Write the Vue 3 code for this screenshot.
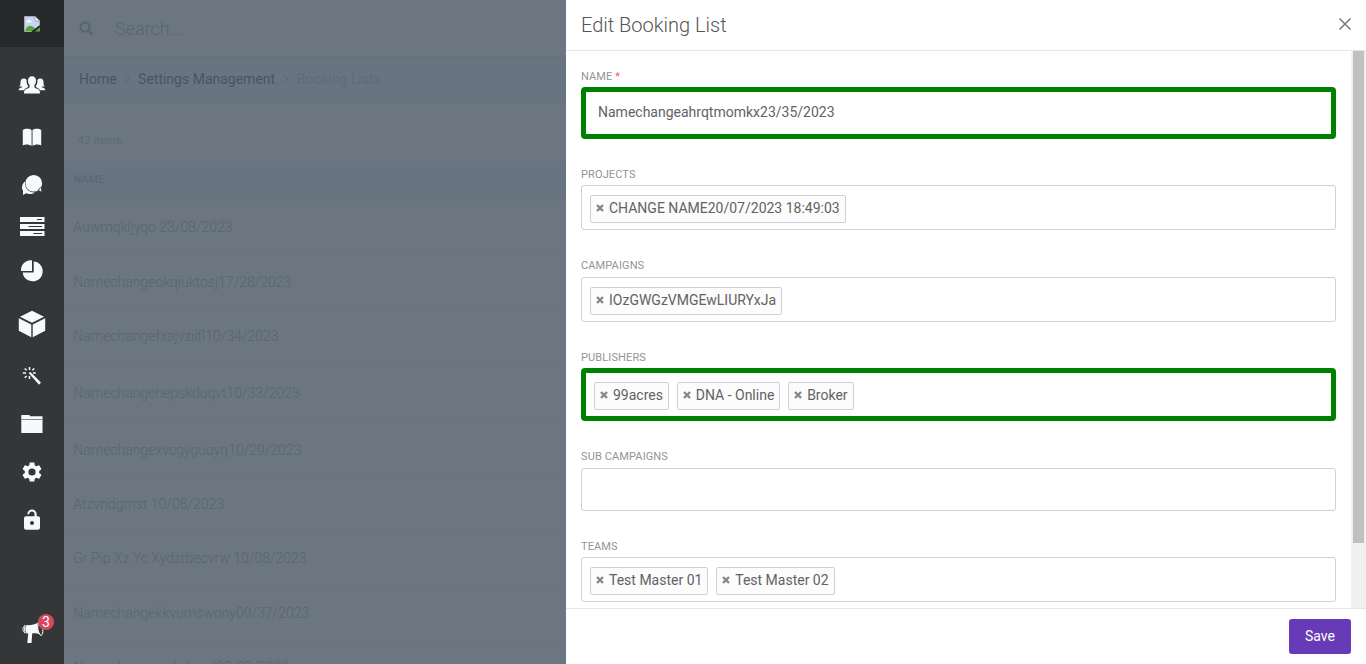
<script setup>
const rows = [
  { name: 'Auwmqkljyqo 23/08/2023', h: 54 },
  { name: 'Namechangeokqiuktosj17/28/2023', h: 55, low: true },
  { name: 'Namechangefxajvziifl10/34/2023', h: 54 },
  { name: 'Namechangehepskduqvt10/33/2023', h: 60 },
  { name: 'Namechangexvcgyguoyq10/29/2023', h: 54 },
  { name: 'Atzvridgmst 10/08/2023', h: 54 },
  { name: 'Gr Pip Xz Yc Xydzrbecvrw 10/08/2023', h: 55 },
  { name: 'Namechangekkvumswony09/37/2023', h: 54 },
  { name: 'Namechangeswkdkeuil08/38/2023', h: 54 },
]
const fields = [
  { label: 'Projects', tags: ['CHANGE NAME20/07/2023 18:49:03'], cls: 'projects' },
  { label: 'Campaigns', tags: ['IOzGWGzVMGEwLIURYxJa'], cls: 'campaigns' },
  { label: 'Publishers', tags: ['99acres', 'DNA - Online', 'Broker'], cls: 'marked publishers' },
  { label: 'Sub Campaigns', tags: [], cls: 'sub' },
  { label: 'Teams', tags: ['Test Master 01', 'Test Master 02'], cls: 'teams' },
]
</script>

<template>
  <div class="app">
    <nav class="side">
      <div class="brand">
        <svg width="16" height="16" viewBox="0 0 16 16">
          <path d="M.5.5H11L15.5 5v5L9 15.500H.5z" fill="#c3d6f4" stroke="#a5a8ac" />
          <path d="M2 6.200c0-1.500 1.500-1.700 2-1.500.7-1.500 2.700-1 2.800.5 1 0 1.200.4 1.200 1z" fill="#fff" />
          <path d="M1 15c1-3.500 3-5.200 5-5.200 2 0 3.500 1 5 2.700L8.500 15z" fill="#55aa32" />
          <path d="M11 .5V5h4.500z" fill="#fff" stroke="#a5a8ac" />
          <path d="M11 15.500 16 11v4.500z" fill="#55aa32" />
          <path d="m8 16 8-6" stroke="#28292b" stroke-width="1.600" />
        </svg>
      </div>
      <div class="item i1">
        <svg width="28" height="20" viewBox="0 0 28 20">
          <path d="M14 1.200c2.400 0 4 1.700 4 4.300 0 2-.6 3.700-1.600 4.700v1.900c.3 1 1.700 1.500 3.200 2 1.800.7 2.400 1.800 2.400 4.500H6c0-2.700.6-3.800 2.400-4.500 1.500-.5 2.900-1 3.200-2v-1.900c-1-1-1.600-2.700-1.600-4.700 0-2.600 1.600-4.300 4-4.300z" />
          <path d="M5.700 3.600c1.300 0 2.300.5 2.900 1.500-.2 2.400.3 4.500 1.500 6v.8c-1 .9-3.100 1.300-4.300 3.300H.8c0-1.600.5-2 2-2.500.9-.4 1.600-.7 1.600-1.200H1.200c1.400-1 1.300-2.800 1.300-4.500 0-2 1.200-3.400 3.200-3.400z" />
          <path d="M22.300 3.600c-1.300 0-2.300.5-2.900 1.500.2 2.400-.3 4.500-1.500 6v.8c1 .9 3.100 1.300 4.300 3.300h5c0-1.600-.5-2-2-2.500-.9-.4-1.600-.7-1.600-1.200h3.200c-1.400-1-1.300-2.800-1.300-4.500 0-2-1.200-3.400-3.200-3.400z" />
        </svg>
      </div>
      <div class="item i2">
        <svg width="20" height="19" viewBox="0 0 20 19">
          <path d="M.8 2C3 .2 7.500.2 9.600 2v16C7.500 16.300 3 16 .8 17.500zM10.500 2c2.100-1.800 6.600-1.800 8.700 0v15.500c-2.200-1.500-6.600-1.200-8.700.5z" />
        </svg>
      </div>
      <div class="item i3">
        <svg width="22" height="22" viewBox="0 0 22 22">
          <path d="M4 7.500C.5 10 .6 15 2 16.500V21l3-1.700c3 1.300 6.700.9 8.800-.9-5.600.8-10.600-4.400-9.800-10.900z" />
          <path d="M12.500 1a8.400 8.300 0 1 1-1 16.500A8.400 8.300 0 0 1 12.500 1zM17 15.500l3.300 2.300-.3-5z" />
        </svg>
      </div>
      <div class="item i4">
        <svg width="26" height="20" viewBox="-.5 .5 26 20">
          <path fill-rule="evenodd" d="M.5.500h24.500v5H.5zM17.500 2.500v1h5v-1zM.5 7.500h24.500v5H.5zM9 9.500v1h13.500v-1zM.5 14.500h24.500v5H.5zM14 16.500v1h8.500v-1z" />
        </svg>
      </div>
      <div class="item i5">
        <svg width="24" height="24" viewBox="0 0 24 24">
          <path d="M1 12V11C1 5.500 5.500 1.200 11 1.200h1V12zM13.700 2.400c5 .2 9 4.500 9 9.800 0 5.700-4.300 10.100-10 10.100-5.400 0-9.600-3.800-10-8.700h11z" />
        </svg>
      </div>
      <div class="item i6">
        <svg width="28" height="28" viewBox="0 0 28 28">
          <path d="M14 .700 26 6.700 14 12.800 2 6.700zM.8 8.300l12.500 6.200v12.800L.8 20.800zM27.200 8.300l-12.500 6.200v12.800l12.500-6.500z" />
        </svg>
      </div>
      <div class="item i7">
        <svg width="20" height="20" viewBox="0 0 20 20">
          <path d="M6.800 7.200 8.200 5.800 19 16.600 17 18.700z" />
          <path d="M7.500 1v3M7.500 10v3M.8 7h3.200M11 7h2.700M2.700 2.500l2 1.800M12.300 2.500l-2 1.800M2.700 11.800l2-1.800" fill="none" stroke="#f8f9fb" stroke-width="1.500" />
        </svg>
      </div>
      <div class="item i8">
        <svg width="22" height="18" viewBox="0 0 22 18">
          <path d="M.3 0h8l1 1.200h12.200V18H.3z" />
          <path d="M.3 4.500h21.200" stroke="#88888b" stroke-width="1" />
        </svg>
      </div>
      <div class="item i9">
        <svg width="20" height="20" viewBox="2 2 20 20">
          <path d="M19.140 12.940c.04-.3.060-.610.060-.940 0-.320-.020-.640-.070-.940l2.030-1.580a.49.49 0 0 0 .12-.61l-1.920-3.320a.488.488 0 0 0-.59-.22l-2.390.96c-.5-.38-1.030-.7-1.620-.94l-.36-2.540a.484.484 0 0 0-.48-.41h-3.840c-.24 0-.43.17-.47.41l-.36 2.540c-.59.24-1.130.57-1.620.94l-2.390-.96c-.22-.08-.47 0-.59.22L2.740 8.870c-.12.21-.08.47.12.61l2.030 1.580c-.05.300-.090.630-.090.940s.020.640.070.940l-2.030 1.580a.49.49 0 0 0-.12.610l1.920 3.320c.12.22.37.29.59.22l2.390-.96c.5.38 1.030.7 1.620.94l.36 2.540c.05.24.24.41.48.41h3.840c.24 0 .44-.17.47-.41l.36-2.540c.59-.24 1.130-.56 1.620-.94l2.390.96c.22.08.47 0 .59-.22l1.920-3.320c.12-.22.070-.470-.12-.610zM12 15.600a3.600 3.600 0 1 1 0-7.200 3.600 3.600 0 0 1 0 7.200z" />
        </svg>
      </div>
      <div class="item i10">
        <svg width="16" height="21" viewBox="0 0 16 21">
          <path fill-rule="evenodd" d="M2 7.300h8.500V5.200a2.600 2.600 0 0 0-5.200 0H3.300a4.700 4.700 0 0 1 9.400 0v2.100H14a2 2 0 0 1 2 2v9.400a2 2 0 0 1-2 2H2a2 2 0 0 1-2-2V9.300a2 2 0 0 1 2-2zM8 12a2 2 0 1 0 0 4 2 2 0 0 0 0-4z" />
        </svg>
      </div>
      <div class="item i11">
        <svg width="22" height="22" viewBox="0 0 22 22">
          <path d="M4.600 3.100C8 3.500 13 2.700 16 .6c-1 4 .3 9 2.500 12-3-1.300-6.500-1.500-8.300-1.200L9.500 21H5.300L6.200 11.600 4.600 11.400c-1.800-2.500-1.700-6 0-8.300z" />
          <path d="M3.200 3.300C.2 5.300.2 9.200 3.200 11.200c-1-2.500-1-5.300 0-7.900zM16.800 1c3.700 2 5.800 10.500 2.200 12.600-3.500-2-4-9-2.200-12.600z" fill="none" stroke="#f8f9fb" />
        </svg>
        <span class="badge">3</span>
      </div>
    </nav>

    <main class="page">
      <div class="search">
        <svg width="15" height="15" viewBox="0 0 15 15"><circle cx="6" cy="6" r="4.600" fill="none" stroke="#596572" stroke-width="2.200" /><path d="m9.500 9.500 3.500 3.500" stroke="#596572" stroke-width="2.700" stroke-linecap="round" /></svg>
        <span>Search...</span>
      </div>
      <div class="crumbs">
        <b>Home</b>
        <svg width="6" height="10" viewBox="0 0 6 10"><path d="m1 1 4 4-4 4" /></svg>
        <b>Settings Management</b>
        <svg width="6" height="10" viewBox="0 0 6 10"><path d="m1 1 4 4-4 4" /></svg>
        <span>Booking Lists</span>
      </div>
      <div class="count">42 items.</div>
      <div class="thead">NAME</div>
      <div v-for="r in rows" :key="r.name" class="row" :class="{ low: r.low }" :style="{ height: r.h + 'px' }">{{ r.name }}</div>
    </main>

    <section class="panel">
      <header>
        <h1>Edit Booking List</h1>
        <svg width="14" height="14" viewBox="0 0 14 14"><path d="m1.500 1.500 11 11m0-11-11 11" stroke="#7c7c7c" stroke-width="1.600" /></svg>
      </header>
      <div class="body">
        <form>
          <label>Name <i>*</i></label>
          <div class="box marked name">Namechangeahrqtmomkx23/35/2023</div>
          <template v-for="f in fields" :key="f.label">
            <label>{{ f.label }}</label>
            <div class="box" :class="f.cls">
              <span v-for="t in f.tags" :key="t" class="tag">
                <svg width="8" height="8" viewBox="0 0 8 8"><path d="m1 1 6 6m0-6-6 6" stroke="#888" stroke-width="2.400" /></svg>{{ t }}
              </span>
            </div>
          </template>
        </form>
        <div class="track"><div class="thumb"></div></div>
      </div>
      <footer><button>Save</button></footer>
    </section>
  </div>
</template>

<style>
body { margin: 0; overflow: hidden; }
</style>

<style scoped>
* { box-sizing: border-box; }
.app { display: flex; width: 1366px; height: 664px; overflow: hidden; font-family: Roboto, sans-serif; font-size: 14px; color: #626262; }
.side { width: 64px; flex: none; background: #353638; display: flex; flex-direction: column; }
.brand { height: 47px; flex: none; background: #28292b; display: flex; justify-content: center; padding-top: 16px; }
.item { flex: none; display: flex; justify-content: center; position: relative; }
.item svg { display: block; fill: #f8f9fb; }
.i1 { margin-top: 28px; }
.i2 { margin-top: 33px; }
.i3 { margin-top: 27px; }
.i4 { margin-top: 21px; }
.i5 { margin-top: 22px; }
.i6 { margin-top: 27px; }
.i7 { margin-top: 28px; }
.i8 { margin-top: 29px; }
.i9 { margin-top: 29px; }
.i10 { margin-top: 27px; }
.i11 { margin-top: 92px; padding-left: 2px; }
.badge { position: absolute; left: 38px; top: -8px; width: 16px; height: 16px; border-radius: 50%; background: #d24a5b; color: #fff; font-size: 14px; line-height: 16px; text-align: center; }
.page { width: 502px; flex: none; background: #6b7681; color: #596572; overflow: hidden; display: flex; flex-direction: column; }
.search { height: 57px; flex: none; border-bottom: 1px solid #65707c; display: flex; align-items: center; padding-left: 15px; font-size: 18px; font-weight: 300; }
.search span { margin-left: 21px; }
.crumbs { height: 46px; flex: none; background: #687480; border-bottom: 1px solid #68737f; display: flex; align-items: center; padding: 0 0 2px 15px; font-size: 14px; color: #5f6b77; }
.crumbs b { font-weight: 400; color: #495563; }
.crumbs svg { margin: 0 7.700px; fill: none; stroke: #5c6773; }
.count { height: 58px; flex: none; padding: 31px 0 0 14px; font-size: 11px; line-height: 14px; letter-spacing: .15px; color: #5e6a76; }
.thead { height: 40px; flex: none; background: #687480; padding: 12px 0 0 9.500px; font-size: 11px; line-height: 14px; }
.row { flex: none; display: flex; align-items: center; padding: 0 0 2px 9.300px; border-bottom: 1px solid #68737f; font-size: 14px; font-weight: 300; }
.row.low { padding-bottom: 0; }
.panel { flex: 1; min-width: 0; background: #fff; display: flex; flex-direction: column; }
header { height: 51px; flex: none; border-bottom: 1px solid #e6e6e6; display: flex; justify-content: space-between; align-items: center; padding: 0 14px 2px 15px; }
h1 { margin: 2px 0 0; font-size: 20px; font-weight: 300; color: #555; }
.body { height: 557px; flex: none; display: flex; overflow: hidden; }
form { width: 785px; padding: 18px 15px 0; display: flex; flex-direction: column; }
label { flex: none; height: 18px; line-height: 15px; font-size: 11px; letter-spacing: .12px; text-transform: uppercase; color: #949494; }
label i { font-style: normal; color: #f55753; }
.box { flex: none; height: 45px; border: 1px solid #cdd0d9; border-radius: 3px; display: flex; gap: 7.800px; padding: 9px 8px; margin-bottom: 28px; }
.marked { border: 5px solid green; border-radius: 4px; }
.name { height: 52px; padding: 0 12px 2px; align-items: center; margin-bottom: 28px; }
.projects { margin-bottom: 28px; }
.projects + label { height: 19px; }
.campaigns { margin-bottom: 28px; }
.publishers { height: 53px; }
.publishers + label { height: 19px; }
.sub { height: 43px; }
.tag { height: 28px; border: 1px solid #cdd0d9; border-radius: 2px; background: #fcfcfc; display: flex; align-items: center; padding: 0 5px 2px; white-space: pre; }
.tag svg { margin: 0 5px 0 0; }
.track { width: 15px; background: #f0f0f0; padding-left: 2px; }
.thumb { width: 11px; height: 492px; background: #c0c0c0; }
footer { flex: 1; border-top: 1px solid #e6e6e6; display: flex; justify-content: flex-end; padding: 10px 15px 0; }
button { width: 62px; height: 35px; border: 0; border-radius: 3px; background: #673ab7; color: #fff; font: 14px Roboto, sans-serif; padding: 0 0 2px; }
</style>
